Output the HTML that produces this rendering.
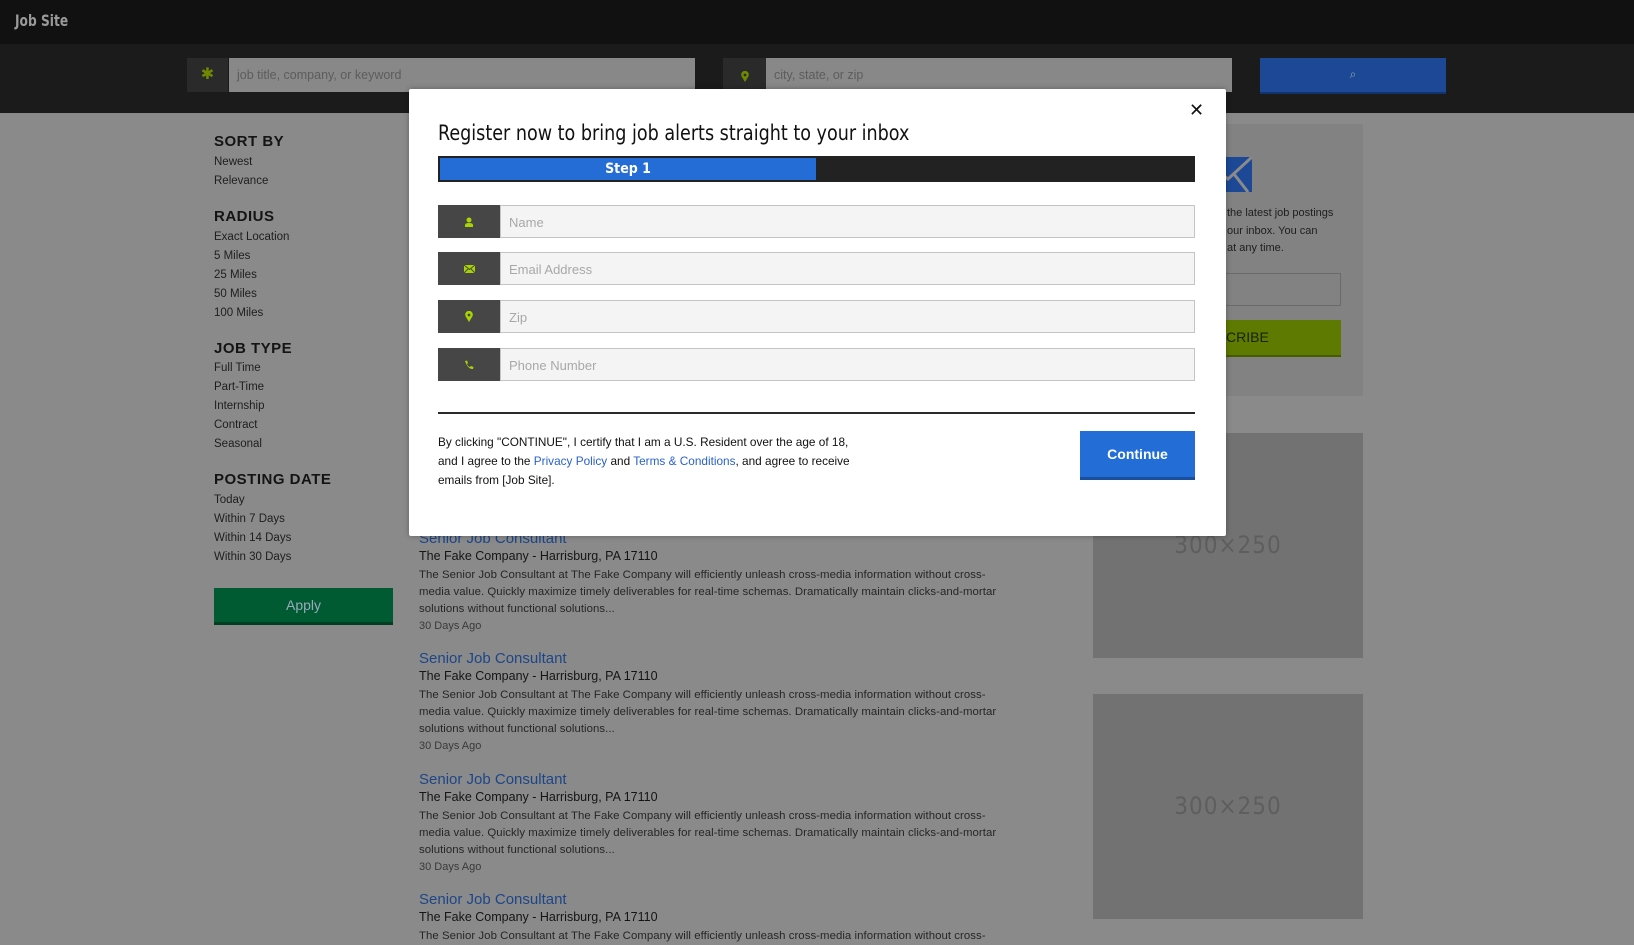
<!DOCTYPE html>
<html><head><meta charset="utf-8"><style>
*{margin:0;padding:0;box-sizing:border-box}
body{width:1634px;height:942px;overflow:hidden;background:#8a8a8a;font-family:"Liberation Sans",sans-serif;position:relative;color:#1a1a1a}
.a{position:absolute}
.cond{font-family:"Liberation Sans Narrow","DejaVu Sans Condensed","Liberation Sans",sans-serif}
.side h3{position:absolute;left:214px;font-size:15px;font-weight:bold;color:#141414;letter-spacing:.5px}
.side div{position:absolute;left:214px;font-size:11.5px;color:#1e1e1e}
.job{position:absolute;left:419px;width:640px}
.job .t{font-size:15px;color:#1d4688;height:19px}
.job .c{font-size:12.5px;color:#151515;height:18px}
.job .d{font-size:11.4px;color:#262626;line-height:17px;letter-spacing:.05px}
.job .g{font-size:11px;color:#3a3a3a;line-height:17px}
.fld{position:absolute;left:438px;width:757px;height:33px}
.fld .ic{position:absolute;left:0;top:0;width:62px;height:33px;background:#464646;display:flex;align-items:center;justify-content:center}
.fld .in{position:absolute;left:62px;top:0;right:0;height:33px;background:#f4f4f4;border:1px solid #c4c4c4;font-size:13px;color:#a8a8a8;padding:9px 8px}
</style></head><body>
<div class="a" style="left:0;top:0;width:1634px;height:44px;background:#111"></div>
<div class="a cond" style="left:15px;top:11px;font-size:16px;font-weight:bold;color:#9a9a9a;transform:scaleX(.85);transform-origin:left">Job Site</div>
<div class="a" style="left:0;top:44px;width:1634px;height:69px;background:#1b1b1b"></div>
<div class="a" style="left:187px;top:58px;width:41px;height:34px;background:#2a2a2a;color:#6f8a00;font-size:16px;text-align:center;line-height:34px">✱</div>
<div class="a" style="left:229px;top:58px;width:466px;height:34px;background:#888;font-size:12.5px;color:#5c5c5c;padding:10px 8px">job title, company, or keyword</div>
<div class="a" style="left:723px;top:58px;width:43px;height:34px;background:#2a2a2a;text-align:center;padding-top:11px"><svg width="8" height="11" viewBox="0 0 8 11"><path d="M4 11L0.7 5.5A3.8 3.8 0 1 1 7.3 5.5Z" fill="#6f8a00"/><circle cx="4" cy="4" r="1.4" fill="#2a2a2a"/></svg></div>
<div class="a" style="left:766px;top:58px;width:466px;height:34px;background:#888;font-size:12.5px;color:#5c5c5c;padding:10px 8px">city, state, or zip</div>
<div class="a" style="left:1260px;top:58px;width:186px;height:36px;background:#1c4896;border-bottom:2px solid #13336e;color:#8aa;text-align:center;line-height:32px;font-size:12px">⌕</div>

<div class="side">
<h3 style="top:133px">SORT BY</h3><div style="top:156px">Newest</div><div style="top:175px">Relevance</div>
<h3 style="top:208px">RADIUS</h3><div style="top:231px">Exact Location</div><div style="top:250px">5 Miles</div><div style="top:269px">25 Miles</div><div style="top:288px">50 Miles</div><div style="top:307px">100 Miles</div>
<h3 style="top:340px">JOB TYPE</h3><div style="top:362px">Full Time</div><div style="top:381px">Part-Time</div><div style="top:400px">Internship</div><div style="top:419px">Contract</div><div style="top:438px">Seasonal</div>
<h3 style="top:471px">POSTING DATE</h3><div style="top:494px">Today</div><div style="top:513px">Within 7 Days</div><div style="top:532px">Within 14 Days</div><div style="top:551px">Within 30 Days</div>
</div>
<div class="a" style="left:214px;top:588px;width:179px;height:37px;background:#005a32;border-bottom:3px solid #003f22;color:#9ab;text-align:center;line-height:34px;font-size:14px">Apply</div>

<div class="job" style="top:530px"><div class="t">Senior Job Consultant</div><div class="c">The Fake Company - Harrisburg, PA 17110</div><div class="d">The Senior Job Consultant at The Fake Company will efficiently unleash cross-media information without cross-<br>media value. Quickly maximize timely deliverables for real-time schemas. Dramatically maintain clicks-and-mortar<br>solutions without functional solutions...</div><div class="g">30 Days Ago</div></div>
<div class="job" style="top:650px"><div class="t">Senior Job Consultant</div><div class="c">The Fake Company - Harrisburg, PA 17110</div><div class="d">The Senior Job Consultant at The Fake Company will efficiently unleash cross-media information without cross-<br>media value. Quickly maximize timely deliverables for real-time schemas. Dramatically maintain clicks-and-mortar<br>solutions without functional solutions...</div><div class="g">30 Days Ago</div></div>
<div class="job" style="top:771px"><div class="t">Senior Job Consultant</div><div class="c">The Fake Company - Harrisburg, PA 17110</div><div class="d">The Senior Job Consultant at The Fake Company will efficiently unleash cross-media information without cross-<br>media value. Quickly maximize timely deliverables for real-time schemas. Dramatically maintain clicks-and-mortar<br>solutions without functional solutions...</div><div class="g">30 Days Ago</div></div>
<div class="job" style="top:891px"><div class="t">Senior Job Consultant</div><div class="c">The Fake Company - Harrisburg, PA 17110</div><div class="d">The Senior Job Consultant at The Fake Company will efficiently unleash cross-media information without cross-</div></div>

<div class="a" style="left:1092px;top:124px;width:271px;height:272px;background:#828282"></div>
<svg class="a" style="left:1200px;top:157px" width="52" height="35" viewBox="0 0 52 35"><rect width="52" height="35" fill="#1c4896"/><path d="M0 0L28 22L52 0M34 17L48 35" stroke="#8a8a8a" stroke-width="3" fill="none"/></svg>
<div class="a" style="left:1227px;top:205px;width:140px;font-size:11px;line-height:17.5px;color:#1e1e1e;white-space:nowrap">the latest job postings<br>our inbox. You can<br>at any time.</div>
<div class="a" style="left:1180px;top:273px;width:161px;height:33px;border:1px solid #6a6a6a"></div>
<div class="a" style="left:1180px;top:320px;width:161px;height:37px;background:#5e7a00;border-bottom:2px solid #465c00;font-size:14px;line-height:35px;padding-left:46px;color:#1a2200">CRIBE</div>
<div class="a cond" style="left:1093px;top:433px;width:270px;height:225px;background:#727272;color:#5e5e5e;font-size:24px;text-align:center;line-height:225px;letter-spacing:1px">300×250</div>
<div class="a cond" style="left:1093px;top:694px;width:270px;height:225px;background:#727272;color:#5e5e5e;font-size:24px;text-align:center;line-height:225px;letter-spacing:1px">300×250</div>

<div class="a" style="left:409px;top:89px;width:817px;height:447px;background:#fff;border-radius:2px;box-shadow:0 0 6px rgba(0,0,0,.3)">
<div class="a" style="left:780px;top:11px;font-size:18px;color:#111">✕</div>
<div class="a cond" style="left:29px;top:32px;font-size:21px;color:#111;white-space:nowrap;transform:scaleX(.93);transform-origin:left">Register now to bring job alerts straight to your inbox</div>
<div class="a" style="left:29px;top:67px;width:757px;height:26px;background:#222"></div>
<div class="a cond" style="left:31px;top:69px;width:376px;height:22px;background:#256dd6;color:#fff;font-weight:bold;font-size:14px;text-align:center;line-height:22px">Step 1</div>
</div>
<div class="fld" style="top:205px"><div class="ic"><svg width="10" height="10" viewBox="0 0 10 10"><circle cx="5" cy="3" r="2.5" fill="#a8d400"/><path d="M1 10V8Q1 6 5 6T9 8V10Z" fill="#a8d400"/></svg></div><div class="in">Name</div></div>
<div class="fld" style="top:252px"><div class="ic"><svg width="11" height="8" viewBox="0 0 11 8"><rect width="11" height="8" fill="#a8d400"/><path d="M0 0L5.5 4.5L11 0M0 8L4 4M11 8L7 4" stroke="#464646" stroke-width="1" fill="none"/></svg></div><div class="in">Email Address</div></div>
<div class="fld" style="top:300px"><div class="ic"><svg width="8" height="11" viewBox="0 0 8 11"><path d="M4 11L0.7 5.5A3.8 3.8 0 1 1 7.3 5.5Z" fill="#a8d400"/><circle cx="4" cy="4" r="1.4" fill="#464646"/></svg></div><div class="in">Zip</div></div>
<div class="fld" style="top:348px"><div class="ic"><svg width="10" height="10" viewBox="0 0 10 10"><path d="M1 1L3 0.5L4 3L3 4Q4 6.5 6 7L7 6L9.5 7L9 9Q4 9.5 1 1Z" fill="#a8d400"/></svg></div><div class="in">Phone Number</div></div>
<div class="a" style="left:438px;top:412px;width:757px;height:2px;background:#2a2a2a"></div>
<div class="a" style="left:438px;top:433px;width:428px;font-size:11.8px;line-height:19px;color:#111">By clicking "CONTINUE", I certify that I am a U.S. Resident over the age of 18, and I agree to the <span style="color:#2a62c9">Privacy Policy</span> and <span style="color:#2a62c9">Terms &amp; Conditions</span>, and agree to receive emails from [Job Site].</div>
<div class="a" style="left:1080px;top:431px;width:115px;height:49px;background:#236ed6;border-bottom:3px solid #1a4f9e;color:#fff;font-size:14px;font-weight:bold;text-align:center;line-height:46px">Continue</div>
</body></html>
